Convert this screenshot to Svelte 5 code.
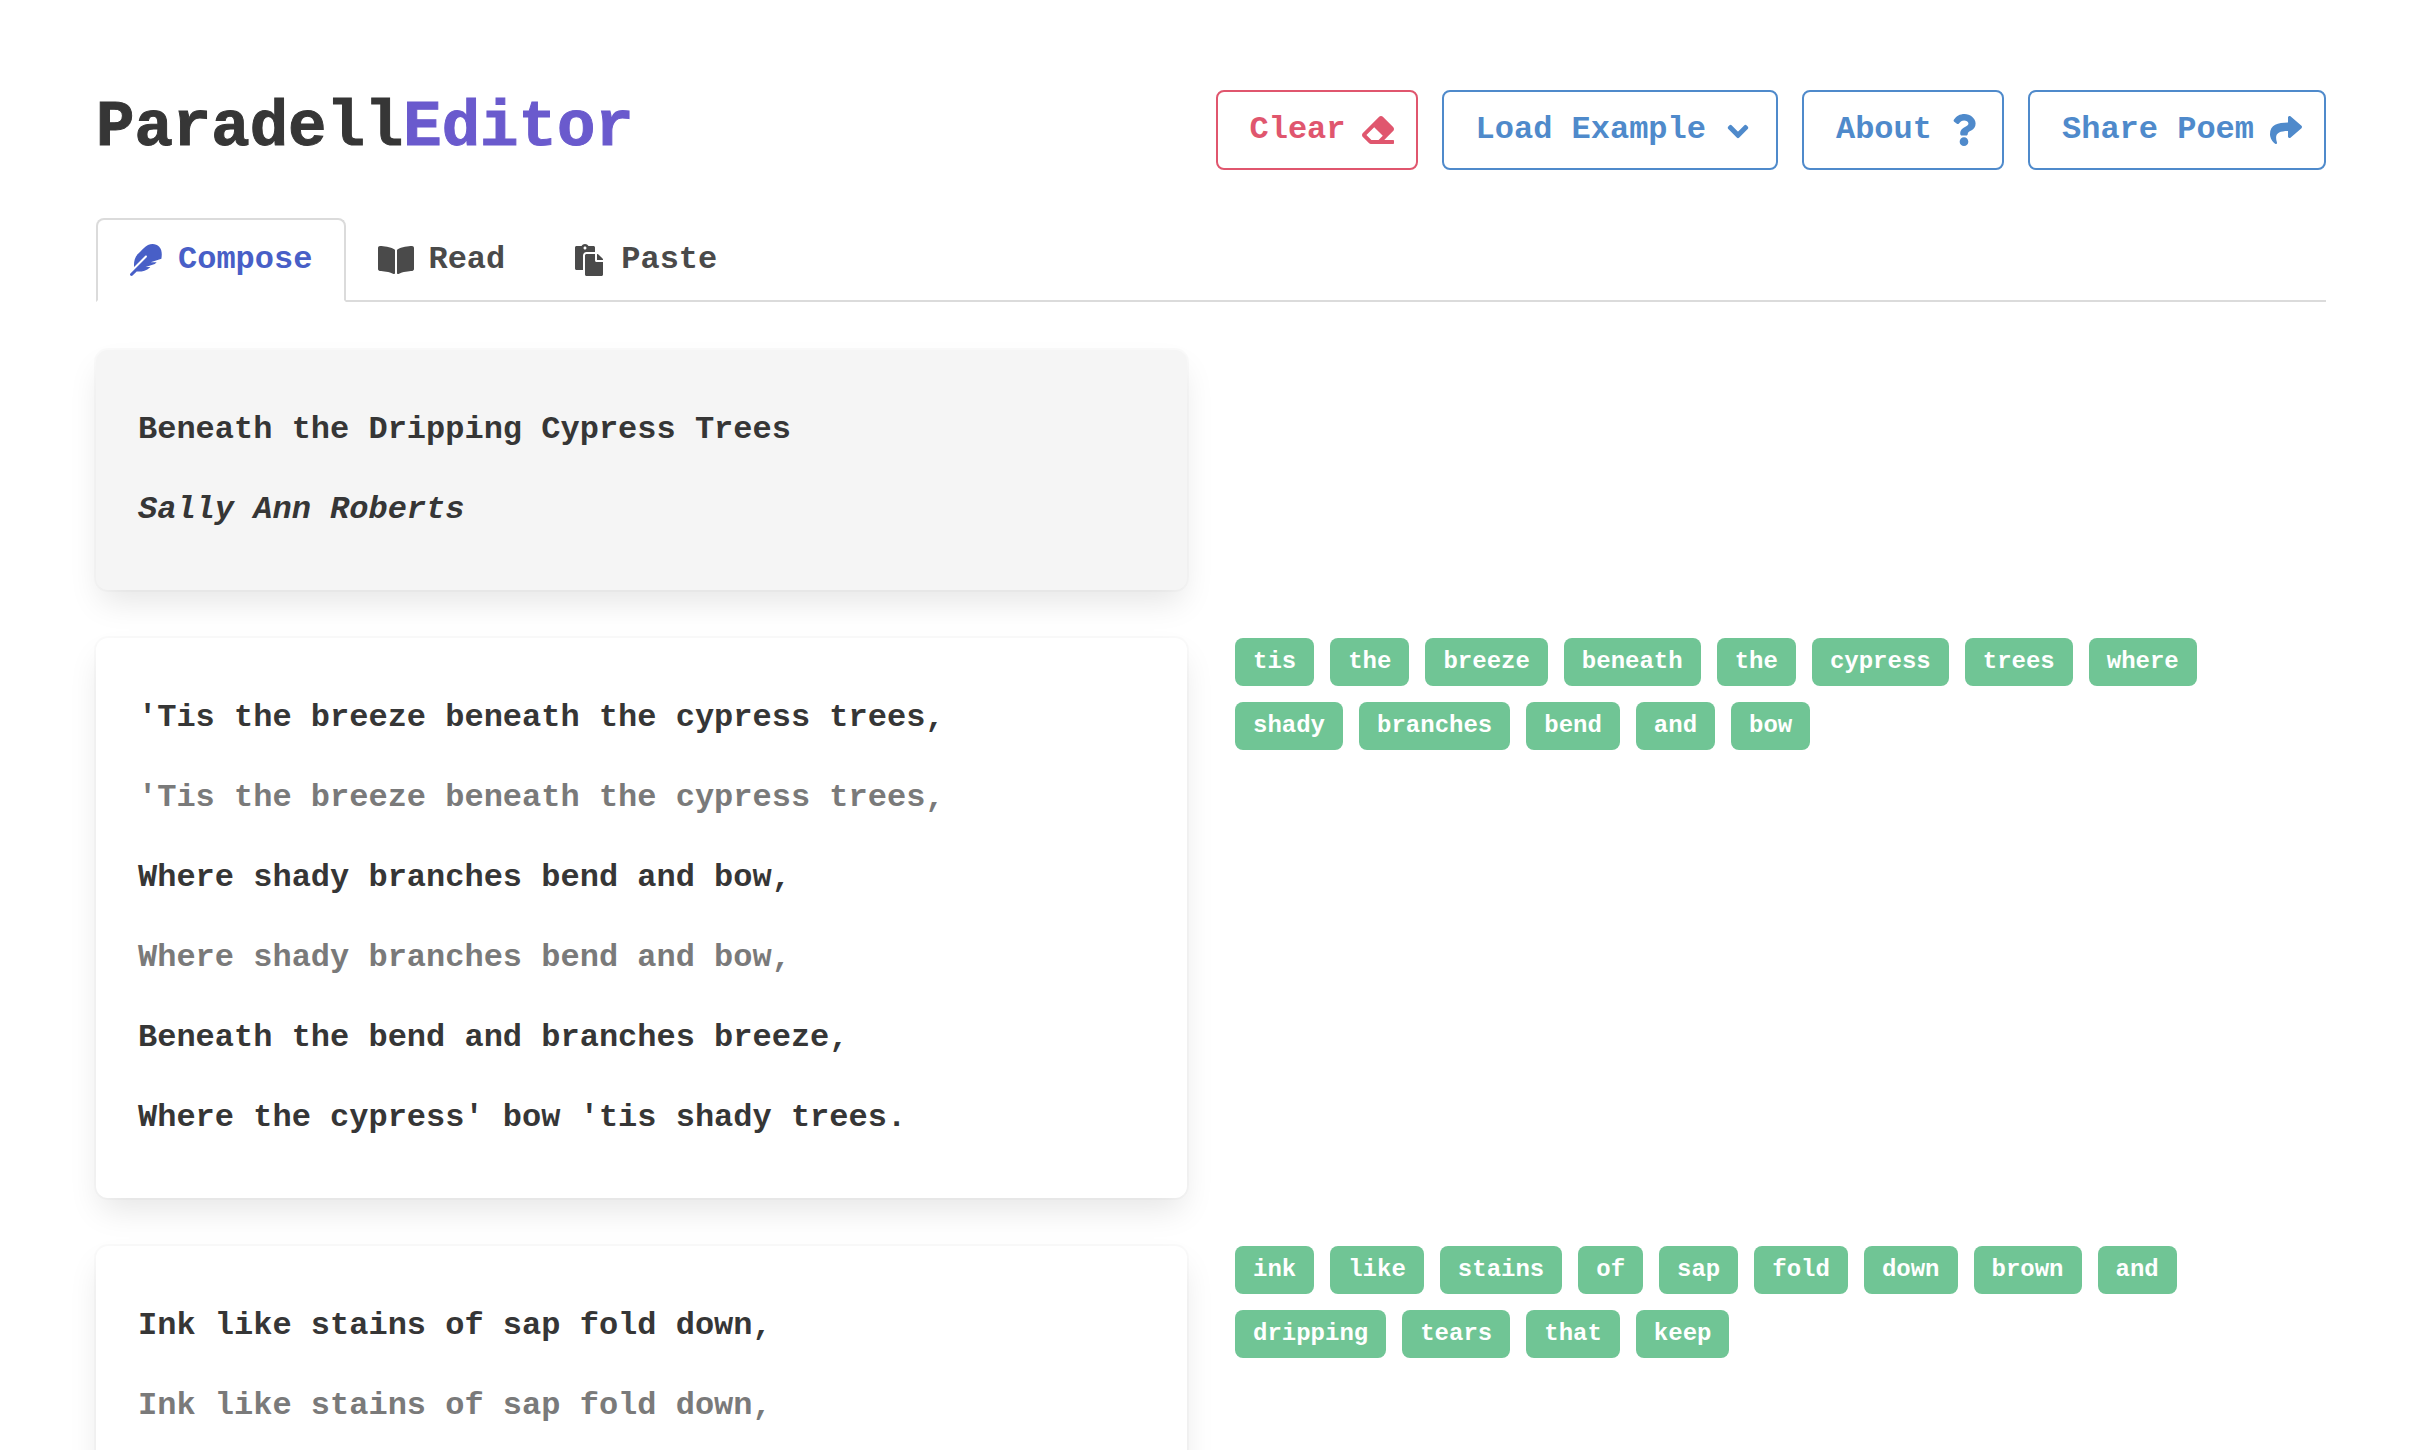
<script>
  const ICONS = {
    feather: { vb: '0 0 512 512', d: 'M467.14 44.84c-62.55-62.48-161.67-64.78-252.28 25.73-78.61 78.52-60.98 60.92-85.75 85.66-60.46 60.39-70.39 150.83-63.64 211.17l178.44-178.25c6.26-6.25 16.4-6.25 22.65 0s6.25 16.38 0 22.63L7.04 471.03c-9.38 9.37-9.38 24.57 0 33.94 9.38 9.37 24.59 9.37 33.98 0l66.1-66.03c60.26 6.76 150.64-3.21 211.12-63.64 3.38-3.38 1.1-1.1 5.68-5.68h-73.68l146.33-48.66c22.78-22.81 7.1-7.15 29.05-29.04h-95.24l171.66-57.23C510 190 520 98 467.14 44.84z' },
    book: { vb: '0 0 576 512', d: 'M542.22 32.05c-54.8 3.11-163.72 14.43-230.96 55.59-4.64 2.84-7.27 7.89-7.27 13.17v363.87c0 11.55 12.63 18.85 23.28 13.49 69.18-34.82 169.23-44.32 218.7-46.92 16.89-.89 30.02-14.43 30.02-30.66V62.75c.01-17.71-15.35-31.74-33.77-30.7zM264.73 87.64C197.5 46.48 88.58 35.17 33.78 32.05 15.36 31.01 0 45.04 0 62.75V400.6c0 16.24 13.13 29.78 30.02 30.66 49.49 2.6 149.59 12.11 218.77 46.95 10.62 5.35 23.21-1.94 23.21-13.46V100.63c0-5.29-2.62-10.14-7.27-12.99z' },
    paste: { vb: '0 0 448 512', d: 'M128 184c0-30.879 25.122-56 56-56h136V56c0-13.255-10.745-24-24-24h-80.61C204.306 12.89 183.637 0 160 0s-44.306 12.89-55.39 32H24C10.745 32 0 42.745 0 56v336c0 13.255 10.745 24 24 24h104V184zm32-144c13.255 0 24 10.745 24 24s-10.745 24-24 24-24-10.745-24-24 10.745-24 24-24zm184 248h104v200c0 13.255-10.745 24-24 24H184c-13.255 0-24-10.745-24-24V184c0-13.255 10.745-24 24-24h136v104c0 13.2 10.8 24 24 24zm104-38.059V256h-96v-96h6.059a24 24 0 0 1 16.97 7.029l65.941 65.941a24.002 24.002 0 0 1 7.03 16.971z' },
    eraser: { vb: '0 0 512 512', d: 'M497.941 273.941c18.745-18.745 18.745-49.137 0-67.882l-160-160c-18.745-18.745-49.138-18.745-67.882 0l-256 256c-18.745 18.745-18.745 49.137 0 67.882l96 96A48.004 48.004 0 0 0 144 480h356c6.627 0 12-5.373 12-12v-40c0-6.627-5.373-12-12-12H355.883l142.058-142.059zm-302.627-62.627l137.373 137.373L265.373 416H150.628l-80-80 124.686-124.686z' },
    chevron: { vb: '-30 0 508 512', d: 'M207.029 381.476L12.686 187.132c-9.373-9.373-9.373-24.569 0-33.941l22.667-22.667c9.357-9.357 24.522-9.375 33.901-.04L224 284.505l154.745-154.021c9.379-9.335 24.544-9.317 33.901.04l22.667 22.667c9.373 9.373 9.373 24.569 0 33.941L240.971 381.476c-9.373 9.372-24.569 9.372-33.942 0z' },
    question: { vb: '0 0 384 512', d: 'M202.021 0C122.202 0 70.503 32.703 29.914 91.026c-7.363 10.58-5.093 25.086 5.178 32.874l43.138 32.709c10.373 7.865 25.132 6.026 33.253-4.148 25.049-31.381 43.63-49.449 82.757-49.449 30.764 0 68.816 19.799 68.816 49.631 0 22.552-18.617 34.134-48.993 51.164-35.423 19.86-82.299 44.576-82.299 106.405V320c0 13.255 10.745 24 24 24h72.471c13.255 0 24-10.745 24-24v-5.773c0-42.86 125.268-44.645 125.268-160.627C377.504 66.256 286.902 0 202.021 0zM192 373.459c-38.196 0-69.271 31.075-69.271 69.271 0 38.195 31.075 69.27 69.271 69.27s69.271-31.075 69.271-69.271-31.075-69.27-69.271-69.27z' },
    share: { vb: '0 0 512 512', d: 'M503.691 189.836L327.687 37.851C312.281 24.546 288 35.347 288 56.015v80.053C127.371 137.907 0 170.1 0 322.326c0 61.441 39.581 122.309 83.333 154.132 13.653 9.931 33.111-2.533 28.077-18.631C66.066 312.814 132.917 274.316 288 272.085V360c0 20.7 24.3 31.453 39.687 18.164l176.004-152c11.071-9.562 11.086-26.753 0-36.328z' }
  };

  const buttons = [
    { label: 'Clear', icon: 'eraser', danger: true },
    { label: 'Load Example', icon: 'chevron' },
    { label: 'About', icon: 'question' },
    { label: 'Share Poem', icon: 'share' }
  ];

  const tabs = [
    { label: 'Compose', icon: 'feather', active: true },
    { label: 'Read', icon: 'book' },
    { label: 'Paste', icon: 'paste' }
  ];

  const stanzas = [
    {
      lines: [
        { t: "'Tis the breeze beneath the cypress trees," },
        { t: "'Tis the breeze beneath the cypress trees,", ghost: true },
        { t: 'Where shady branches bend and bow,' },
        { t: 'Where shady branches bend and bow,', ghost: true },
        { t: 'Beneath the bend and branches breeze,' },
        { t: "Where the cypress' bow 'tis shady trees." }
      ],
      words: ['tis', 'the', 'breeze', 'beneath', 'the', 'cypress', 'trees', 'where', 'shady', 'branches', 'bend', 'and', 'bow']
    },
    {
      lines: [
        { t: 'Ink like stains of sap fold down,' },
        { t: 'Ink like stains of sap fold down,', ghost: true }
      ],
      words: ['ink', 'like', 'stains', 'of', 'sap', 'fold', 'down', 'brown', 'and', 'dripping', 'tears', 'that', 'keep']
    }
  ];
</script>

{#snippet icon(name)}
  <svg viewBox={ICONS[name].vb} class="glyph {name}" aria-hidden="true"><path fill="currentColor" d={ICONS[name].d} /></svg>
{/snippet}

<main class="page">
  <header class="header">
    <h1 class="title">Paradell<span class="accent">Editor</span></h1>
    <div class="actions">
      {#each buttons as b}
        <button class="btn" class:danger={b.danger}>
          <span>{b.label}</span>
          <span class="btn-icon">{@render icon(b.icon)}</span>
        </button>
      {/each}
    </div>
  </header>

  <ul class="tabs">
    {#each tabs as tab}
      <li class="tab" class:active={tab.active}>
        <span class="tab-icon">{@render icon(tab.icon)}</span>
        <span>{tab.label}</span>
      </li>
    {/each}
  </ul>

  <section class="row">
    <div class="box muted">
      <p class="line">Beneath the Dripping Cypress Trees</p>
      <p class="line author">Sally Ann Roberts</p>
    </div>
  </section>

  {#each stanzas as s}
    <section class="row">
      <div class="box">
        {#each s.lines as l}
          <p class="line" class:ghost={l.ghost}>{l.t}</p>
        {/each}
      </div>
      <div class="tags">
        {#each s.words as w}
          <span class="tag">{w}</span>
        {/each}
      </div>
    </section>
  {/each}
</main>

<style>
  :global(body) {
    margin: 0;
    background: #fff;
    overflow: hidden;
  }
  .page {
    box-sizing: border-box;
    width: 2416px;
    height: 1450px;
    overflow: hidden;
    padding: 90px 90px 0 96px;
    font-family: "Liberation Mono", monospace;
    font-weight: 700;
    font-size: 32px;
    line-height: 48px;
    color: #363636;
  }
  .header {
    display: flex;
    justify-content: space-between;
    align-items: flex-start;
    margin-bottom: 48px;
  }
  .title {
    margin: 0;
    font-size: 64px;
    line-height: 76px;
    color: #363636;
    -webkit-text-stroke: 1px currentColor;
  }
  .accent { color: #6a5acd; }
  .actions { display: flex; gap: 24px; }
  .btn {
    display: flex;
    align-items: center;
    height: 80px;
    box-sizing: border-box;
    padding: 0 32px;
    border: 2px solid #4f8acb;
    border-radius: 8px;
    background: #fff;
    color: #4f8acb;
    font: inherit;
  }
  .btn.danger {
    border-color: #e0566e;
    color: #e0566e;
  }
  .btn-icon {
    display: flex;
    justify-content: center;
    width: 48px;
    margin-left: 8px;
    margin-right: -18px;
  }
  .glyph { display: block; flex: none; height: 32px; }
  .glyph.book { width: 36px; }
  .glyph.paste { width: 28px; }
  .glyph.feather, .glyph.eraser, .glyph.share { width: 32px; }
  .glyph.question { width: 24px; }
  .glyph.chevron { width: 22px; height: 25px; margin-top: 3px; }
  .glyph.chevron path { stroke: currentColor; stroke-width: 36; stroke-linejoin: round; }
  .tabs {
    display: flex;
    list-style: none;
    margin: 0 0 48px;
    padding: 0;
    border-bottom: 2px solid #dbdbdb;
  }
  .tab {
    display: flex;
    align-items: center;
    padding: 16px 32px;
    margin-bottom: -2px;
    border: 2px solid transparent;
    border-radius: 8px 8px 0 0;
    color: #4a4a4a;
  }
  .tab.active {
    border-color: #dbdbdb;
    border-bottom-color: #fff;
    color: #485fc7;
  }
  .tab-icon {
    display: flex;
    justify-content: center;
    width: 32px;
    margin-right: 16px;
  }
  .row {
    display: grid;
    grid-template-columns: 1091px 1091px;
    column-gap: 48px;
    align-items: start;
    margin-bottom: 48px;
  }
  .box {
    padding: 56px 40px 24px 42px;
    border-radius: 12px;
    background: #fff;
    box-shadow: 0 16px 32px -4px rgba(10, 10, 10, 0.1), 0 0 0 2px rgba(10, 10, 10, 0.02);
  }
  .box.muted { background: #f5f5f5; }
  .line { margin: 0 0 32px; }
  .author { font-style: italic; }
  .ghost { color: #7a7a7a; }
  .tags {
    display: flex;
    flex-wrap: wrap;
  }
  .tag {
    display: flex;
    align-items: center;
    height: 48px;
    padding: 0 18px;
    margin: 0 16px 16px 0;
    border-radius: 8px;
    background: #70c595;
    color: #fff;
    font-size: 24px;
    line-height: 36px;
  }
</style>
